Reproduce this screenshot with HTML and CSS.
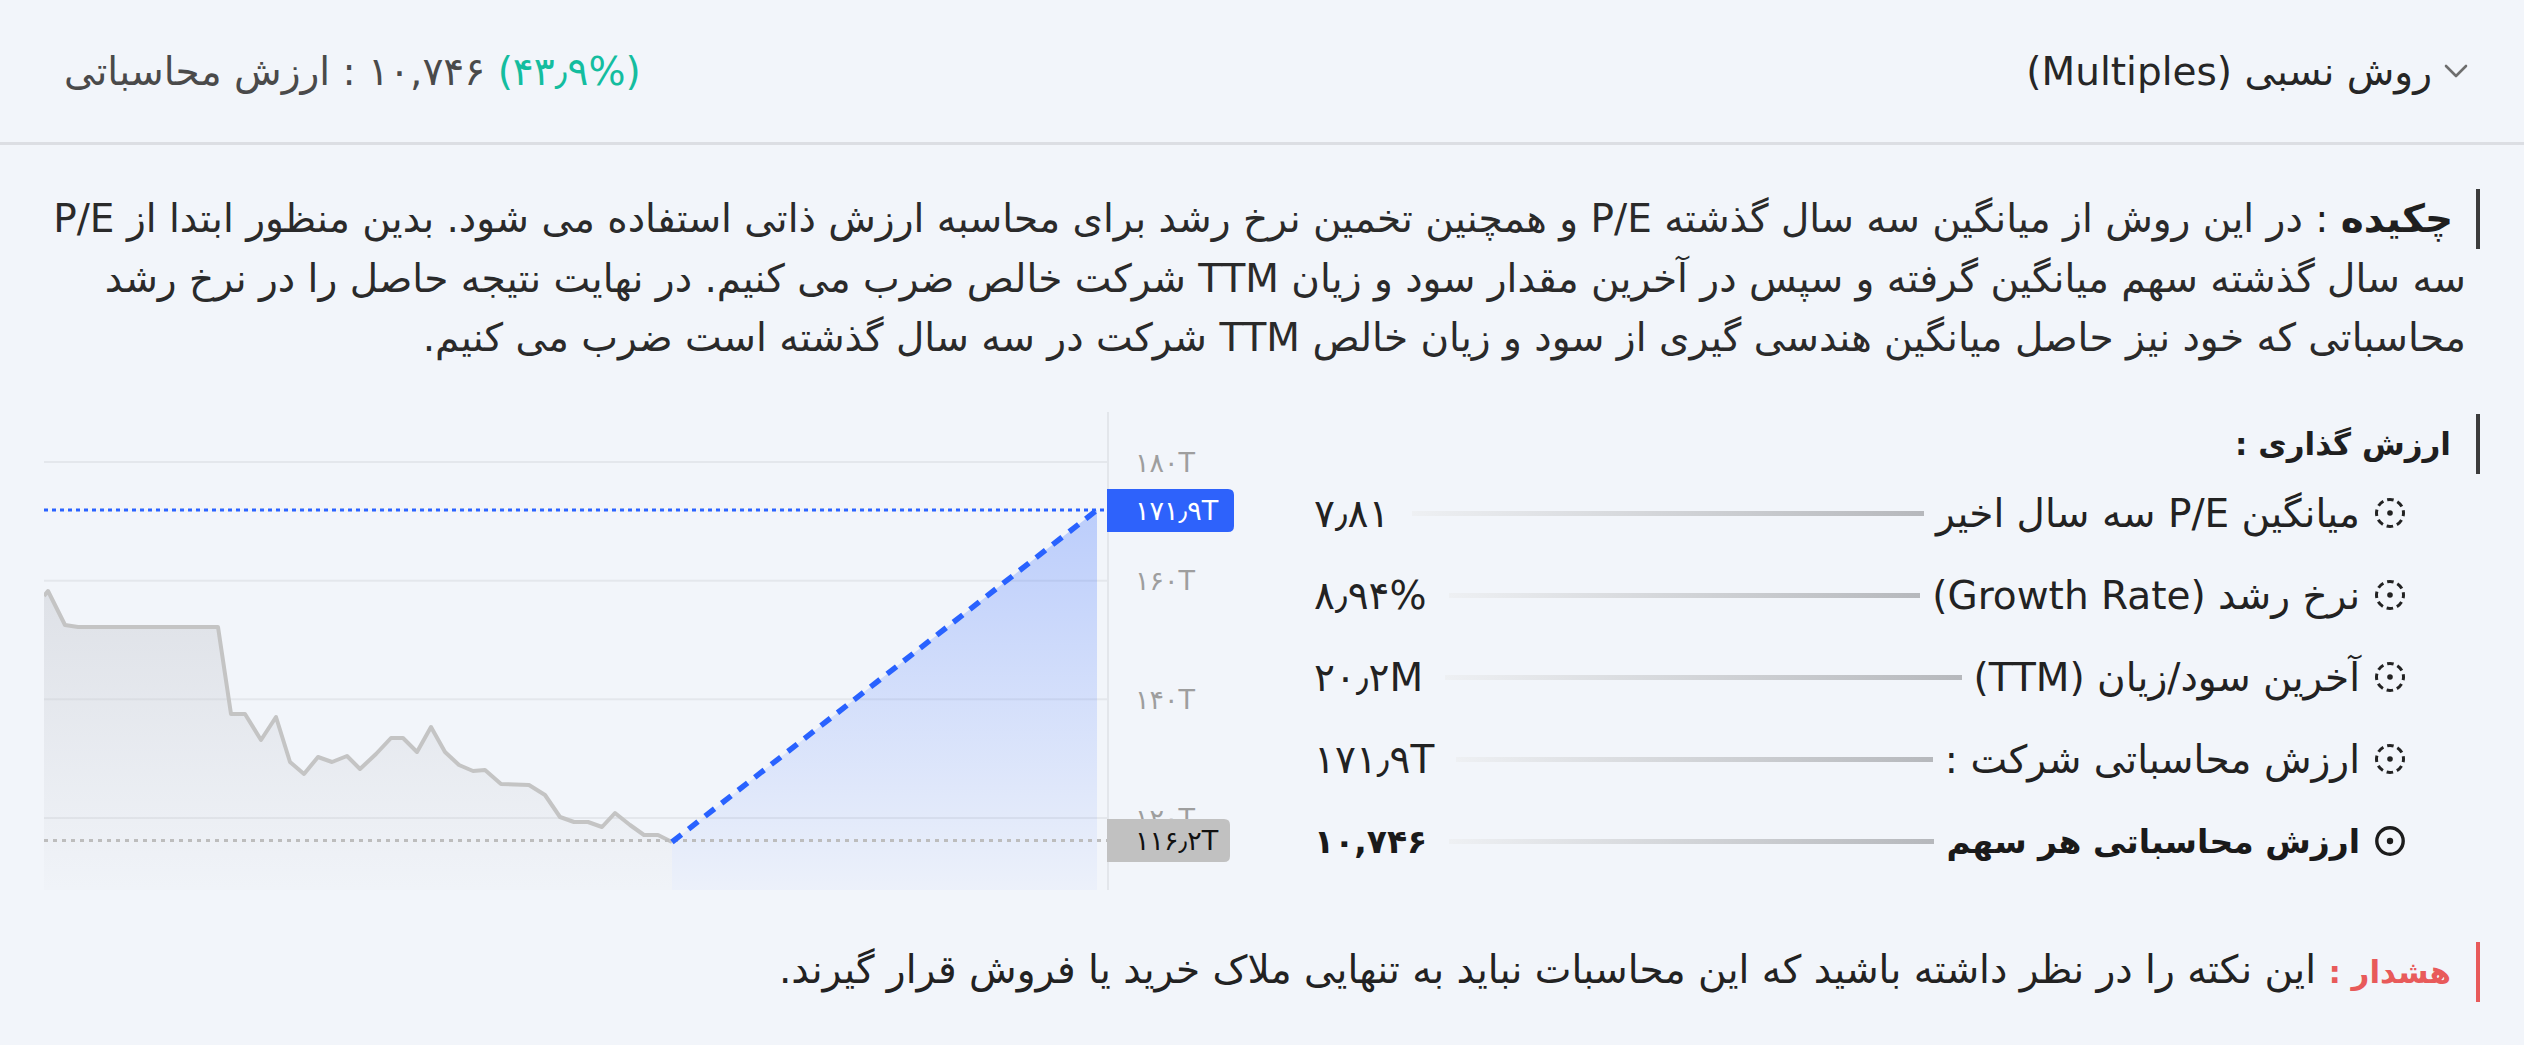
FILE: index.html
```html
<!DOCTYPE html>
<html lang="fa" dir="rtl">
<head>
<meta charset="utf-8">
<title>ارزش گذاری</title>
<link rel="stylesheet" href="styles.css">
</head>
<body>
<header class="header">
  <div class="method">
    <svg class="chevron" viewBox="0 0 24 14" width="24" height="14"><path d="M2 2 L12 12 L22 2" fill="none" stroke="#6e6e6e" stroke-width="2.6" stroke-linecap="round" stroke-linejoin="round"/></svg>
    <span>روش نسبی (Multiples)</span>
  </div>
  <div class="calc">
    <span class="iso">ارزش محاسباتی</span> <span class="iso">:</span> <span class="iso">۱۰,۷۴۶</span> <span class="iso pct">(۴۳٫۹%)</span>
  </div>
</header>

<main class="content">
  <p class="summary"><span class="tag"><b>چکیده</b> :</span> در این روش از میانگین سه سال گذشته P/E و همچنین تخمین نرخ رشد برای محاسبه ارزش ذاتی استفاده می شود. بدین منظور ابتدا از P/E سه سال گذشته سهم میانگین گرفته و سپس در آخرین مقدار سود و زیان TTM شرکت خالص ضرب می کنیم. در نهایت نتیجه حاصل را در نرخ رشد محاسباتی که خود نیز حاصل میانگین هندسی گیری از سود و زیان خالص TTM شرکت در سه سال گذشته است ضرب می کنیم.</p>

  <section class="valuation">
    <div class="panel">
      <div class="vtitle"><span class="tag wide small"><b>ارزش گذاری :</b></span></div>
      <div class="rows">
        <div class="row">
          <svg class="icon" viewBox="0 0 32 32"><circle cx="16" cy="16" r="13.5" fill="none" stroke="#222" stroke-width="3" stroke-dasharray="6.6 4" stroke-dashoffset="3.3"/><circle cx="16" cy="16" r="2.8" fill="#222"/></svg>
          <span class="label">میانگین P/E سه سال اخیر</span>
          <span class="bar"></span>
          <span class="value">۷٫۸۱</span>
        </div>
        <div class="row">
          <svg class="icon" viewBox="0 0 32 32"><circle cx="16" cy="16" r="13.5" fill="none" stroke="#222" stroke-width="3" stroke-dasharray="6.6 4" stroke-dashoffset="3.3"/><circle cx="16" cy="16" r="2.8" fill="#222"/></svg>
          <span class="label">نرخ رشد (Growth Rate)</span>
          <span class="bar"></span>
          <span class="value">۸٫۹۴%</span>
        </div>
        <div class="row">
          <svg class="icon" viewBox="0 0 32 32"><circle cx="16" cy="16" r="13.5" fill="none" stroke="#222" stroke-width="3" stroke-dasharray="6.6 4" stroke-dashoffset="3.3"/><circle cx="16" cy="16" r="2.8" fill="#222"/></svg>
          <span class="label">آخرین سود/زیان (TTM)</span>
          <span class="bar"></span>
          <span class="value">۲۰٫۲M</span>
        </div>
        <div class="row">
          <svg class="icon" viewBox="0 0 32 32"><circle cx="16" cy="16" r="13.5" fill="none" stroke="#222" stroke-width="3" stroke-dasharray="6.6 4" stroke-dashoffset="3.3"/><circle cx="16" cy="16" r="2.8" fill="#222"/></svg>
          <span class="label">ارزش محاسباتی شرکت :</span>
          <span class="bar"></span>
          <span class="value">۱۷۱٫۹T</span>
        </div>
        <div class="row strong">
          <svg class="icon" viewBox="0 0 32 32"><circle cx="16" cy="16" r="13.2" fill="none" stroke="#1c1c1c" stroke-width="3.4"/><circle cx="16" cy="16" r="3.2" fill="#1c1c1c"/></svg>
          <span class="label">ارزش محاسباتی هر سهم</span>
          <span class="bar"></span>
          <span class="value">۱۰,۷۴۶</span>
        </div>
      </div>
    </div>

    <div class="chart">
      <svg class="chart-svg" width="1190" height="478" viewBox="0 0 1190 478">
        <defs>
          <linearGradient id="gfill" x1="0" y1="180" x2="0" y2="478" gradientUnits="userSpaceOnUse">
            <stop offset="0" stop-color="#c3c6cd" stop-opacity="0.42"/>
            <stop offset="1" stop-color="#c3c6cd" stop-opacity="0.04"/>
          </linearGradient>
          <linearGradient id="bfill" x1="0" y1="98" x2="0" y2="478" gradientUnits="userSpaceOnUse">
            <stop offset="0" stop-color="#2962ff" stop-opacity="0.27"/>
            <stop offset="1" stop-color="#2962ff" stop-opacity="0.03"/>
          </linearGradient>
        </defs>
        <g stroke="#e4e7ec" stroke-width="2">
          <line x1="0" y1="50" x2="1064" y2="50"/>
          <line x1="0" y1="168.7" x2="1064" y2="168.7"/>
          <line x1="0" y1="287.3" x2="1064" y2="287.3"/>
          <line x1="0" y1="406" x2="1064" y2="406"/>
        </g>
        <path d="M0,184 L4,179 L21,213 L34,215 L174,215 L187,302 L201,302 L217,328 L232,305 L246,350 L260,362 L274,345 L288,350 L303,344 L316,357 L332,342 L347,326 L359,326 L373,340 L387,315 L401,340 L415,353 L429,359 L441,358 L457,372 L485,373 L501,383 L516,405 L530,410 L544,410 L558,415 L571,401 L586,413 L600,423 L614,423 L628,430 L628,478 L0,478 Z" fill="url(#gfill)"/>
        <path d="M628,430 L1053,98 L1053,478 L628,478 Z" fill="url(#bfill)"/>
        <path d="M0,184 L4,179 L21,213 L34,215 L174,215 L187,302 L201,302 L217,328 L232,305 L246,350 L260,362 L274,345 L288,350 L303,344 L316,357 L332,342 L347,326 L359,326 L373,340 L387,315 L401,340 L415,353 L429,359 L441,358 L457,372 L485,373 L501,383 L516,405 L530,410 L544,410 L558,415 L571,401 L586,413 L600,423 L614,423 L628,430" fill="none" stroke="#c4c4c4" stroke-width="4" stroke-linejoin="round"/>
        <line x1="0" y1="98" x2="1063" y2="98" stroke="#2962ff" stroke-width="3" stroke-dasharray="4 4"/>
        <line x1="0" y1="428.5" x2="1063" y2="428.5" stroke="#bdbdbd" stroke-width="3" stroke-dasharray="4 5"/>
        <line x1="628" y1="430" x2="1053" y2="98" stroke="#2962ff" stroke-width="5.5" stroke-dasharray="12 9"/>
        <line x1="1064" y1="0" x2="1064" y2="478" stroke="#e3e6eb" stroke-width="2"/>
        <g class="axis" fill="#9e9e9e">
          <text x="1091" y="50">۱۸۰T</text>
          <text x="1091" y="168.7">۱۶۰T</text>
          <text x="1091" y="287.3">۱۴۰T</text>
          <text x="1091" y="406">۱۲۰T</text>
        </g>
        <path d="M1063,77 H1184 Q1190,77 1190,83 V114 Q1190,120 1184,120 H1063 Z" fill="#2e62fb"/>
        <text class="badge-text" x="1091" y="98.5" fill="#ffffff">۱۷۱٫۹T</text>
        <path d="M1063,407 H1180 Q1186,407 1186,413 V444 Q1186,450 1180,450 H1063 Z" fill="#c1c1c1"/>
        <text class="badge-text" x="1091" y="428.5" fill="#111111">۱۱۶٫۲T</text>
      </svg>
    </div>
  </section>

  <p class="warning"><span class="tag wide red small"><b>هشدار :</b></span> این نکته را در نظر داشته باشید که این محاسبات نباید به تنهایی ملاک خرید یا فروش قرار گیرند.</p>
</main>
</body>
</html>
```

FILE: styles.css
```css
* { box-sizing: border-box; }

body {
  margin: 0;
  background: #f2f5fa;
  font-family: "DejaVu Sans", "Noto Sans", sans-serif;
  font-size: 39px;
  color: #222222;
}

.header {
  display: flex;
  justify-content: space-between;
  align-items: center;
  height: 145px;
  border-bottom: 3px solid #dcdee3;
  padding: 0 56px 0 64px;
}

.method {
  display: flex;
  align-items: center;
  gap: 12px;
  color: #262626;
}

.chevron { flex: none; }

.calc {
  direction: ltr;
  color: #4a4a4a;
}

.iso { unicode-bidi: isolate; }

.pct { color: #14bd9f; }

.content {
  padding: 0 44px;
}

.summary {
  margin: 44px 0 0;
  padding-right: 14px;
  line-height: 59px;
  color: #2a2a2a;
}

.tag {
  display: inline-block;
  border-right: 4px solid #3c3c3c;
  padding-right: 23px;
  margin-right: -14px;
  line-height: 60px;
  color: #1f1f1f;
}

.tag.wide {
  margin-right: 0;
  padding-right: 25px;
}

.tag.small {
  font-size: 31px;
}

.tag.red {
  border-right-color: #e85a5a;
  color: #e85a5a;
}

.valuation {
  display: grid;
  grid-template-columns: 1fr 1190px;
  column-gap: 80px;
  margin-top: 45px;
  align-items: start;
}

.vtitle {
  height: 60px;
  line-height: 60px;
}

.rows {
  padding-right: 74px;
}

.row {
  display: flex;
  align-items: center;
  height: 82px;
  color: #222222;
}

.icon {
  width: 32px;
  height: 32px;
  flex: none;
  margin-left: 14px;
}

.label { white-space: nowrap; }

.bar {
  flex: 1;
  height: 5px;
  margin: 0 12px 0 22px;
  background: linear-gradient(to left, #b6b8bc, #eef0f3);
}

.value {
  direction: ltr;
  unicode-bidi: isolate;
  white-space: nowrap;
}

.row.strong .label {
  font-weight: bold;
  font-size: 33px;
  color: #1a1a1a;
}

.row.strong .value {
  font-weight: bold;
  font-size: 33px;
  color: #1a1a1a;
}

.chart-svg {
  display: block;
  direction: ltr;
}

.axis text {
  font-family: "DejaVu Sans", sans-serif;
  font-size: 27px;
  dominant-baseline: central;
}

.badge-text {
  font-family: "DejaVu Sans", sans-serif;
  font-size: 27px;
  dominant-baseline: central;
}

.warning {
  margin: 50px 0 0;
  line-height: 60px;
  color: #222222;
}
```
